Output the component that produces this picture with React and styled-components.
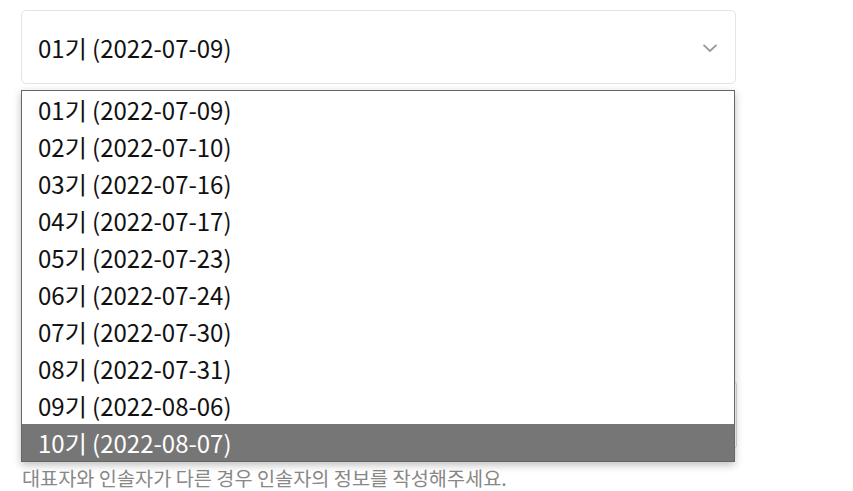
import React from 'react';
import styled, { createGlobalStyle } from 'styled-components';

const GlobalStyle = createGlobalStyle`
  html, body {
    margin: 0;
    padding: 0;
    background: #fff;
  }
  body {
    font-family: "Noto Sans CJK KR", "Noto Sans", sans-serif;
  }
`;

const Page = styled.div`
  position: relative;
  width: 853px;
  height: 491px;
  overflow: hidden;
  padding: 10px 0 0 21px;
  box-sizing: border-box;
`;

const Field = styled.div`
  width: 715px;
`;

const SelectBox = styled.div`
  display: flex;
  align-items: center;
  justify-content: space-between;
  height: 74px;
  box-sizing: border-box;
  padding: 0 17px 0 16px;
  border: 1px solid #e3e3e3;
  border-radius: 5px;
  font-size: 24px;
  color: #111;
`;

const Chevron = styled.svg`
  width: 16px;
  height: 10px;
  margin-top: 2px;
`;

const UnderInput = styled.div`
  height: 70px;
  margin-top: 296px;
  width: 716px;
  box-sizing: border-box;
  border: 1px solid #d8d8d8;
  border-radius: 5px;
`;

const Help = styled.p`
  margin: 16px 0 0 1px;
  font-size: 19.7px;
  color: #888;
  line-height: 24px;
  white-space: nowrap;
`;

const Menu = styled.ul`
  position: absolute;
  top: 90px;
  left: 21px;
  width: 714px;
  margin: 0;
  padding: 0;
  list-style: none;
  box-sizing: border-box;
  background: #fff;
  border: 1px solid #666;
  box-shadow: 0 3px 8px rgba(0, 0, 0, 0.25);
`;

const Option = styled.li`
  height: 37px;
  display: flex;
  align-items: center;
  padding-left: 16px;
  font-size: 24px;
  color: ${p => (p.$active ? '#fff' : '#111')};
  background: ${p => (p.$active ? '#767676' : 'transparent')};
`;

const options = [
  '01기 (2022-07-09)',
  '02기 (2022-07-10)',
  '03기 (2022-07-16)',
  '04기 (2022-07-17)',
  '05기 (2022-07-23)',
  '06기 (2022-07-24)',
  '07기 (2022-07-30)',
  '08기 (2022-07-31)',
  '09기 (2022-08-06)',
  '10기 (2022-08-07)',
];

export default function App() {
  return (
    <Page>
      <GlobalStyle />
      <Field>
        <SelectBox>
          <span>01기 (2022-07-09)</span>
          <Chevron viewBox="0 0 16 10" fill="none">
            <path d="M1.5 1.8 L8 8 L14.5 1.8" stroke="#999" strokeWidth="1.8" />
          </Chevron>
        </SelectBox>
        <UnderInput />
        <Help>대표자와 인솔자가 다른 경우 인솔자의 정보를 작성해주세요.</Help>
      </Field>
      <Menu>
        {options.map((o, i) => (
          <Option key={o} $active={i === options.length - 1}>{o}</Option>
        ))}
      </Menu>
    </Page>
  );
}
